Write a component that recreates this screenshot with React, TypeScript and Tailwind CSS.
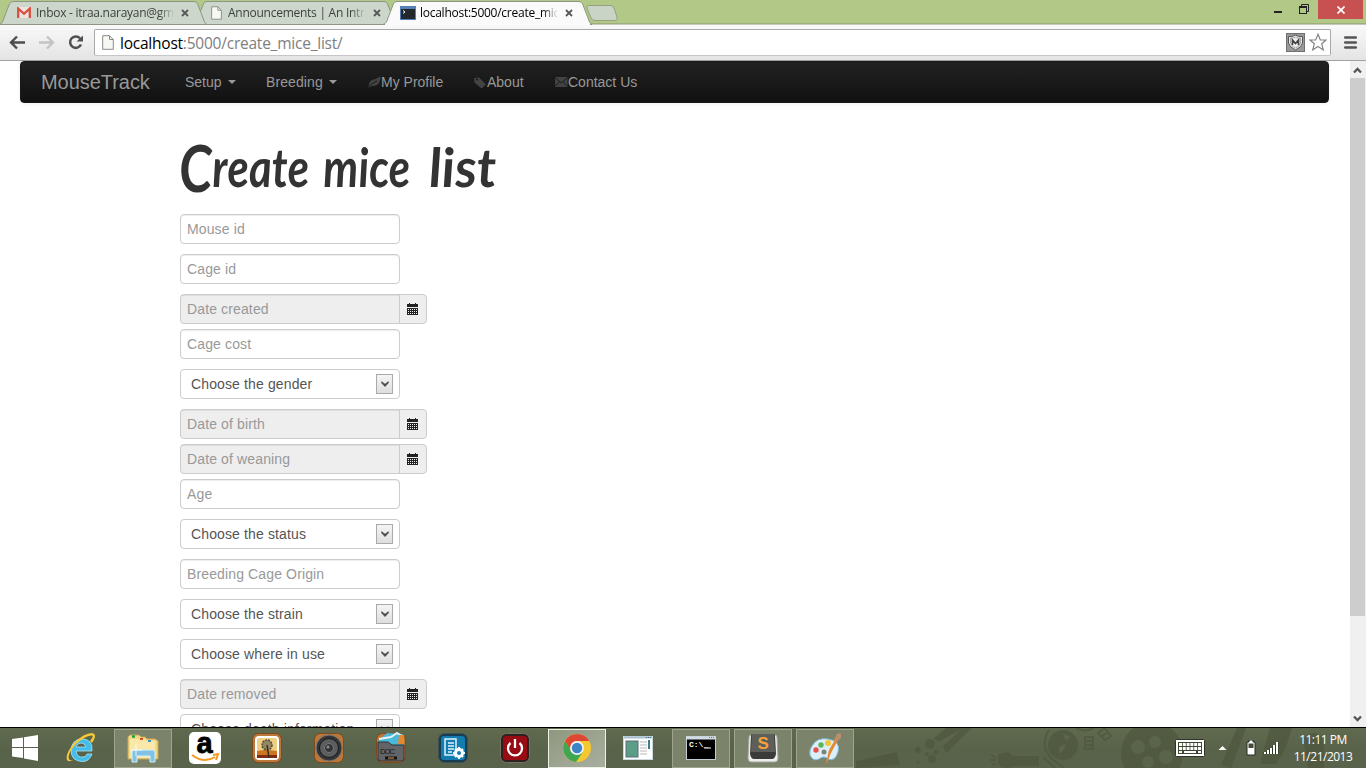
import type { ReactNode } from 'react';

const shade = 'shadow-[inset_0_1px_1px_rgba(0,0,0,0.075)]';

function tabPath(l: number, r: number) {
  return `M${l} 24.5C${l + 3} 24 ${l + 4} 21 ${l + 5} 18L${l + 10} 5C${l + 11} 2.5 ${l + 12} 1.5 ${l + 15} 1.5H${r - 14}C${r - 11} 1.5 ${r - 10} 2.5 ${r - 9} 5L${r - 4} 18C${r - 3} 21 ${r - 2} 24 ${r} 24.5Z`;
}

function Cross() {
  return (
    <svg width="8" height="8" viewBox="0 0 8 8" className="shrink-0">
      <path d="M1 1L7 7M7 1L1 7" stroke="#56595a" strokeWidth="1.8" />
    </svg>
  );
}

function PageIcon({ w, h }: { w: number; h: number }) {
  return (
    <svg width={w} height={h} viewBox="0 0 12 15" className="shrink-0">
      <path d="M.7.7H7.5L11.3 4.500V14.300H.7Z" fill="#f7f7f3" stroke="#8b8b86" />
      <path d="M7.500.7V4.500H11.300" fill="none" stroke="#8b8b86" />
    </svg>
  );
}

function TabStrip() {
  return (
    <div className="relative h-[24px] bg-[#b1c886] font-['Open_Sans',sans-serif] text-[12px]">
      <svg className="absolute left-0 top-0" width="1366" height="25" viewBox="0 0 1366 25">
        <path d="M0 24H1366" stroke="#8b9674" />
        <path d={tabPath(193, 397)} fill="#cdd6cb" stroke="#8d9686" />
        <path d={tabPath(-1, 207)} fill="#cdd6cb" stroke="#8d9686" />
        <path d={tabPath(383, 592)} fill="#fafafa" stroke="#8d9686" />
        <path d="M385 24.500H590" stroke="#fafafa" strokeWidth="2" />
        <path d="M589 5.500H611Q613 5.500 614 8L617 17Q618 20 615 20.500H595Q592 20.500 591 18L587 8Q586 5.500 589 5.500Z" fill="#cad4c6" stroke="#95a17e" />
      </svg>
      <div className="relative flex h-full">
        <div className="flex h-[25px] w-[192px] shrink-0 items-center pl-[17px]">
          <svg width="14" height="11" viewBox="0 0 14 11" className="shrink-0">
            <rect width="14" height="11" fill="#eee4df" />
            <path d="M1.200 11V1.500L7 6.800L12.800 1.500V11" fill="none" stroke="#d9503f" strokeWidth="2.300" />
          </svg>
          <span className="ml-[5px] w-[138px] overflow-hidden whitespace-nowrap text-[#3c413c] tracking-[-0.27px] [mask-image:linear-gradient(to_right,black_89%,transparent)]">Inbox - itraa.narayan@gmail.com</span>
          <span className="ml-[7px] flex"><Cross /></span>
        </div>
        <div className="flex h-[25px] w-[192px] shrink-0 items-center pl-[19px]">
          <PageIcon w={11} h={14} />
          <span className="ml-[6px] w-[138px] overflow-hidden whitespace-nowrap text-[#3c413c] tracking-[-0.26px] [mask-image:linear-gradient(to_right,black_89%,transparent)]">Announcements | An Introduction</span>
          <span className="ml-[7px] flex"><Cross /></span>
        </div>
        <div className="flex h-[25px] w-[200px] shrink-0 items-center pl-[16px]">
          <svg width="16" height="14" viewBox="0 0 16 14" className="shrink-0">
            <rect width="16" height="14" fill="#5480b8" />
            <rect x="1" y="3" width="14" height="10" fill="#24272b" />
            <path d="M3 4.500L5 6L3 7.500" fill="none" stroke="#fff" />
          </svg>
          <span className="ml-[4px] w-[138px] overflow-hidden whitespace-nowrap text-black tracking-[-0.26px] [mask-image:linear-gradient(to_right,black_89%,transparent)]">localhost:5000/create_mice_list</span>
          <span className="ml-[7px] flex"><Cross /></span>
        </div>
        <div className="ml-auto flex">
          <svg width="46" height="19" viewBox="0 0 46 19">
            <path d="M2 12H10" stroke="#222" strokeWidth="2" />
            <path d="M29.500 6V4.500H36.500V11.500H35" fill="none" stroke="#222" />
            <rect x="27.500" y="6.500" width="7" height="7" fill="none" stroke="#222" />
            <path d="M27 7H35" stroke="#222" strokeWidth="2" />
          </svg>
          <div className="mr-[3px] flex h-[19px] w-[45px] items-center justify-center bg-[#c75050]">
            <svg width="8" height="8" viewBox="0 0 8 8"><path d="M.5.5L7.500 7.500M7.500.5L.5 7.500" stroke="#fff" strokeWidth="1.700" /></svg>
          </div>
        </div>
      </div>
    </div>
  );
}

function Toolbar() {
  return (
    <div className="flex h-[37px] items-center border-b border-[#a2a2a2] bg-gradient-to-b from-[#fafafa] to-[#e4e4e4]">
      <svg width="94" height="36" viewBox="0 0 94 36" className="shrink-0">
        <path d="M25 18.500H11.500M17 12.500L11 18.500L17 24.500" fill="none" stroke="#4d4d4d" strokeWidth="2.400" />
        <path d="M39 18.500H52.500M47 12.500L53 18.500L47 24.500" fill="none" stroke="#c4c4c4" strokeWidth="2.400" />
        <path d="M80 14.300A5.700 5.700 0 1 0 81 20.500" fill="none" stroke="#505050" strokeWidth="2.500" />
        <path d="M83 11.500V17.500H76.500Z" fill="#505050" />
      </svg>
      <div className="mt-[1px] flex h-[27px] w-[1237px] shrink-0 items-center rounded-[2px] border border-[#a9a9a9] border-b-[#c6c6c6] bg-white pl-[7px] pr-[3px]">
        <PageIcon w={12} h={15} />
        <span className="ml-[6px] whitespace-nowrap font-['Open_Sans',sans-serif] text-[15.500px] leading-[20px] tracking-[-0.23px] text-[#808080]"><span className="text-black">localhost</span>:5000/create_mice_list/</span>
        <svg width="19" height="19" viewBox="0 0 19 19" className="ml-auto shrink-0">
          <rect x=".5" y=".5" width="18" height="18" fill="#999" stroke="#707070" />
          <path d="M2.500 3.500Q6 4 9.500 2Q13 4 16.500 3.500V10Q16 14 9.500 17Q3 14 2.500 10Z" fill="#e8e8e8" stroke="#555" />
          <path d="M4.500 5Q7 5.500 9.500 4Q12 5.500 14.500 5V10Q14 13 9.500 15Q5 13 4.500 10Z" fill="#eee" stroke="#888" strokeWidth=".7" />
          <path d="M6.500 12V7L9.500 10.500L12.500 7V12" fill="none" stroke="#444" strokeWidth="1.700" />
        </svg>
        <svg width="18" height="19" viewBox="0 0 18 19" className="ml-[4px] shrink-0">
          <path d="M9 1.300L11.300 7H17L12.700 10.800L14.300 17L9 13.500L3.700 17L5.300 10.800L1 7H6.700Z" fill="#fff" stroke="#848484" strokeWidth="1.200" />
        </svg>
      </div>
      <svg width="13" height="13" viewBox="0 0 13 13" className="ml-[13px] shrink-0">
        <path d="M1.200 1.500H11.800M1.200 6.500H11.800M1.200 11.500H11.800" stroke="#555" strokeWidth="2.600" strokeLinecap="round" />
      </svg>
    </div>
  );
}

function Caret() {
  return <span className="ml-[6px] mt-[-1px] h-0 w-0 border-x-[4px] border-t-[4px] border-x-transparent border-t-[#999]" />;
}

function Navbar() {
  return (
    <nav className="ml-[20px] flex h-[42px] w-[1309px] items-center rounded-[4px] border border-[#181818] bg-gradient-to-b from-[#222] to-[#111] pl-[20px] text-[14px] text-[#999] shadow-[0_1px_4px_rgba(0,0,0,0.065)]">
      <span className="w-[144px] text-[20px] tracking-[-0.05px]">MouseTrack</span>
      <span className="flex w-[81px] items-center">Setup<Caret /></span>
      <span className="flex w-[102px] items-center tracking-[0.1px]">Breeding<Caret /></span>
      <span className="flex w-[105px] items-center">
        <svg width="13" height="12" viewBox="0 0 13 12">
          <path d="M1 9C1 3 7 4 12.500.5C13 5 10 10.500 4 10L1.500 11.500L.3 11Z" fill="#434343" />
          <path d="M1 11Q4 6.500 9 5" fill="none" stroke="#1b1b1b" />
        </svg>My Profile
      </span>
      <span className="flex w-[82px] items-center">
        <svg width="14" height="13" viewBox="0 0 14 13"><path fillRule="evenodd" d="M1 2L6 1.500L13 8.500L8.500 12.500L1.500 6.500ZM3 3.500A1 1 0 1 0 5 3.500A1 1 0 1 0 3 3.500" fill="#434343" /></svg>About
      </span>
      <span className="flex items-center">
        <svg width="13" height="10" viewBox="0 0 13 10"><path d="M0 0H12.500V10H0Z" fill="#434343" /><path d="M0 .5L6.200 6L12.500.5M0 9.500L4.500 4.800M12.500 9.500L8 4.800" fill="none" stroke="#1b1b1b" /></svg>Contact Us
      </span>
    </nav>
  );
}

function TextField({ label }: { label: string }) {
  return <div className={`mb-[10px] flex h-[30px] w-[220px] shrink-0 items-center rounded-[4px] border border-[#ccc] bg-white px-[6px] text-[#999] ${shade}`}>{label}</div>;
}

function DateField({ label }: { label: string }) {
  return (
    <div className="mb-[5px] flex h-[30px] w-[247px] shrink-0 rounded-[4px] border border-[#ccc] bg-[#eee]">
      <div className={`flex w-[219px] items-center border-r border-[#ccc] px-[6px] text-[#999] ${shade}`}>{label}</div>
      <div className="flex flex-1 items-center pl-[7px]">
        <svg width="11" height="12" viewBox="0 0 11 12" shapeRendering="crispEdges">
          <path d="M0 1H11V4H0ZM2 0H3V1H2ZM8 0H9V1H8ZM0 5H11V12H0Z" fill="#222" />
          <path d="M1 6.500H10M1 8.500H10M1 10.500H10" stroke="#eee" strokeDasharray="1 1" />
        </svg>
      </div>
    </div>
  );
}

function SelectField({ label }: { label: string }) {
  return (
    <div className="mb-[10px] flex h-[30px] w-[220px] shrink-0 items-center rounded-[4px] border border-[#ccc] bg-white pl-[10px] pr-[6px] text-[#555]">
      {label}
      <span className="ml-auto flex h-[20px] w-[17px] items-center justify-center border border-[#aaa] bg-gradient-to-b from-[#f4f4f4] to-[#dedede]">
        <svg width="8" height="6" viewBox="0 0 8 6"><path d="M.7.7V2L4 5.500L7.300 2V.7L4 3.300Z" fill="#444" stroke="#444" strokeWidth=".7" /></svg>
      </span>
    </div>
  );
}

function Heading() {
  return (
    <h1 className="flex h-[111px] items-baseline pt-[39px] font-['Lato',sans-serif] text-[54px] font-bold italic leading-[50px] text-[#333]">
      <span className="w-[144px] whitespace-nowrap"><span className="inline-block origin-bottom-left scale-x-[0.82] skew-x-[3deg] first-letter:align-[-5px] first-letter:text-[65px]">Create</span></span>
      <span className="w-[106px] whitespace-nowrap"><span className="inline-block origin-bottom-left scale-x-[0.82] skew-x-[3deg]">mice</span></span>
      <span className="inline-block origin-bottom-left skew-x-[3deg]">list</span>
    </h1>
  );
}

function ScrollBar() {
  return (
    <div className="ml-auto flex h-full w-[16px] flex-col items-center bg-[#f0f0f0] pr-[1px]">
      <svg width="15" height="17" viewBox="0 0 15 17" className="shrink-0"><path d="M4 11.500L7.500 8L11 11.500" fill="none" stroke="#555" strokeWidth="2.300" /></svg>
      <div className="h-[538px] w-[15px] shrink-0 bg-[#cdcdcd]" />
      <svg width="15" height="17" viewBox="0 0 15 17" className="mt-auto shrink-0"><path d="M4 6.500L7.500 10L11 6.500" fill="none" stroke="#555" strokeWidth="2.300" /></svg>
    </div>
  );
}

function Cell({ kind = 'plain', children }: { kind?: 'plain' | 'open' | 'active'; children: ReactNode }) {
  const look = kind === 'open' ? 'border border-[#9da58f] bg-[#7b846b]' : kind === 'active' ? 'border border-[#eef0e8] bg-gradient-to-br from-[#8f987f] to-[#a9ae9f]' : '';
  return (
    <div className={`flex h-[39px] w-[58px] shrink-0 items-center justify-center ${look}`}>
      <svg width="32" height="32" viewBox="0 0 32 32">{children}</svg>
    </div>
  );
}

function WoodFrame() {
  return <rect x="1.500" y="1.500" width="29" height="29" rx="6" fill="#bc7839" stroke="#7d4a20" />;
}

function Backdrop() {
  return (
    <svg className="absolute left-[856px] top-0" width="510" height="40" viewBox="0 0 510 40" fill="#4f583f" opacity=".75">
      <path d="M0 33L41 24L44 37L0 40ZM78 10L90 0H116L90 25L87 18L105 2L82 14Z" />
      <circle cx="74" cy="16" r="5" /><circle cx="62" cy="22" r="3" /><circle cx="80" cy="24" r="2.500" /><circle cx="71" cy="26" r="2" /><circle cx="76" cy="31" r="4" /><circle cx="62" cy="34" r="1.500" />
      <path d="M143 27L152 25L157 29H182V37H157L151 40L143 36ZM135 27L140 30M134 32H140M136 37L140 35" stroke="#4f583f" strokeWidth="2" />
      <circle cx="207" cy="17" r="15" />
      <path d="M193 2Q183 18 196 31L208 40M187 29L199 40M220 0Q228 5 238 0" fill="none" stroke="#4f583f" strokeWidth="2" />
      <path d="M203 19L210 16L208 22L203 26ZM207 6L215 9L210 13Z" fill="#5b654b" />
      <path d="M229 9H237V21H229ZM229 13H237M229 17H237M242 5L249 0L255 8L249 12ZM246 8L252 4" fill="none" stroke="#4f583f" strokeWidth="2" />
      <circle cx="296" cy="25" r="31" />
      <g fill="#5b654b"><circle cx="282" cy="19" r="7" /><circle cx="299" cy="14" r="6" /><circle cx="310" cy="29" r="7" /><circle cx="292" cy="34" r="6" /></g>
      <path d="M365 37L381 0H390L375 40ZM414 0L436 0L429 22L420 36H404ZM447 10Q459 0 468 11V40H452Z" />
    </svg>
  );
}

function Taskbar() {
  return (
    <footer className="relative flex h-[41px] shrink-0 border-t border-black bg-gradient-to-b from-[#606a4e] via-[#59634a] to-[#59624a]">
      <Backdrop />
      <div className="relative flex w-full items-center">
        <div className="flex w-[52px] shrink-0 items-center pl-[12px]">
          <svg width="27" height="26" viewBox="0 0 27 26" fill="#fff"><path d="M0 4L11 2.500V12H0ZM12 2.300L26 0V12H12ZM0 13H11V23L0 21.500ZM12 13H26V26L12 23.500Z" /></svg>
        </div>
        <div className="flex gap-1">
          <Cell>
            <path d="M27 19H11Q12 26 18 25Q21 25 22 22H27Q24 30 17 29.500Q6 29 6 18Q7 7 17 7Q28 7 27 19ZM11 15H21Q20 11 16 11Q12 11 11 15Z" fill="#44bdeb" stroke="#a6e5fa" strokeWidth=".8" fillRule="evenodd" />
            <path d="M25 9Q30 3 26 3.500Q20 4 11 12Q2 22 4 27Q6 30 11 27Q4 31 2 28Q0 22 9 11Q19 1 27 1Q33 2 27 11Z" fill="#f7c838" />
          </Cell>
          <Cell kind="open">
            <path d="M1 5L3 3H12L14 5H18L20 7H28L31 9V27H1Z" fill="#f2d883" stroke="#c7a654" />
            <path d="M3 7H17L19 9H28V26H3Z" fill="#f9e8a7" /><path d="M5 4.500H8" stroke="#16a34a" strokeWidth="2.500" /><path d="M13 7H16" stroke="#d34f2f" strokeWidth="2" /><path d="M21 9H24" stroke="#3594cb" strokeWidth="2" />
            <path d="M5 20Q5 18 8 18H25Q28 18 28 20V30H23V24H10V30H5Z" fill="#84c2e4" stroke="#d1effa" /><path d="M9 12V24M3 18H15" stroke="#fff" opacity=".8" />
          </Cell>
          <Cell>
            <rect width="32" height="32" rx="5" fill="#fff" />
            <text x="7.500" y="21" fontFamily="Liberation Sans, sans-serif" fontSize="29" fontWeight="bold" fill="#000" stroke="#000" strokeWidth=".8">a</text>
            <path d="M3 23Q15 32 26 25M24 23L29 22L27 28" fill="none" stroke="#f39a24" strokeWidth="2" />
          </Cell>
          <Cell>
            <WoodFrame /><rect x="4" y="4" width="24" height="24" rx="4" fill="#fff" />
            <rect x="6" y="6" width="20" height="20" rx="2" fill="#efcf83" /><path d="M6 19Q15 17 26 19V26H6Z" fill="#cf7423" /><path d="M6 23H26V26H6Z" fill="#7e2d14" />
            <circle cx="16" cy="13" r="5" fill="#938660" stroke="#514c32" strokeWidth="1.500" strokeDasharray="2 1" /><path d="M16 13L18 26" stroke="#352f1f" strokeWidth="1.500" />
          </Cell>
          <Cell>
            <WoodFrame /><circle cx="16" cy="16" r="13" fill="#343536" stroke="#777" /><circle cx="16" cy="16" r="9.500" fill="#5c5d5e" stroke="#191919" /><circle cx="16" cy="16" r="4.500" fill="#34373a" stroke="#777" /><circle cx="15" cy="15" r="1.500" fill="#888" />
          </Cell>
          <Cell>
            <WoodFrame /><path d="M3 9L12 1L28 2L29 13L3 14Z" fill="#4ab8d9" /><path d="M4 7L16 5L22 1L28 5L26 11" fill="none" stroke="#e0f4f5" strokeWidth="2" /><path d="M24 3H29V12H23Z" fill="#e4892d" />
            <path d="M3 10H13L17 13H29V27Q29 29 27 29H5Q3 29 3 27Z" fill="#626467" stroke="#333" />
            <text x="5" y="22" fontFamily="Liberation Sans, sans-serif" fontSize="8" fill="#16191a" textLength="15">DOC</text><path d="M10 26H22" stroke="#111" strokeWidth="3" /><path d="M13 26H19" stroke="#ed9a51" />
          </Cell>
          <Cell>
            <rect x="1.500" y="1.500" width="29" height="29" rx="6" fill="#173d51" stroke="#3f5157" /><rect x="4" y="4" width="24" height="24" rx="3" fill="#147daf" />
            <path d="M8 7H19V23H8ZM11 11H17M11 14H17M11 17H17M11 20H15" fill="none" stroke="#dff4ff" strokeWidth="1.500" />
            <circle cx="22" cy="21" r="3.500" fill="#147daf" stroke="#fff" strokeWidth="3" /><path d="M22 15V18M22 24V27M16 21H19M25 21H28M18 17L20 19M24 23L26 25M26 17L24 19M20 23L18 25" stroke="#fff" strokeWidth="2" />
          </Cell>
          <Cell>
            <rect x="1.500" y="1.500" width="29" height="29" rx="6" fill="#30201f" stroke="#767461" /><rect x="4" y="4" width="24" height="24" rx="3" fill="#970c12" /><path d="M11.500 11A7 7 0 1 0 20.500 11M16 7V16" fill="none" stroke="#fff" strokeWidth="2.300" />
          </Cell>
          <Cell kind="active">
            <circle cx="16" cy="16" r="14" fill="#f5c92e" /><path d="M4 9A14 14 0 0 1 28.300 9H16A7 7 0 0 0 10 19Z" fill="#df4735" /><path d="M4 9A14 14 0 0 0 15 30L22 20Q16 25 10 19Z" fill="#3fa652" /><circle cx="16" cy="16" r="7" fill="#eef2f4" /><circle cx="16" cy="16" r="5.200" fill="#3d83c5" />
          </Cell>
          <Cell>
            <rect x=".5" y="4.500" width="29" height="23" fill="#fff" stroke="#cdd8df" /><path d="M1 5.500H29" stroke="#a8c1d0" strokeWidth="2" /><path d="M23 5.500H29" stroke="#386782" strokeDasharray="1 1" />
            <rect x="3" y="9" width="12" height="16" fill="#5b9d85" stroke="#566f7b" /><path d="M17 10H24M17 13H24M17 16H24M17 19H24M17 22H24" stroke="#b9b9b9" /><path d="M26 8V17" stroke="#3e7e8d" strokeWidth="2" />
          </Cell>
          <Cell kind="open">
            <rect x="1.500" y="4.500" width="29" height="23" fill="#000" stroke="#c2cbd2" /><path d="M1 6H31" stroke="#d0dbe4" strokeWidth="3" /><path d="M24 5.500H30" stroke="#597ba0" strokeDasharray="1 1" />
            <text x="4" y="15" fontFamily="Liberation Mono, monospace" fontSize="8" fontWeight="bold" fill="#fff">C:\_</text><path d="M19 16H26" stroke="#fff" />
          </Cell>
          <Cell kind="open">
            <path d="M2 5Q2 3 4 3H28Q30 3 30 5L31 26Q31 30 28 30H4Q1 30 1 26Z" fill="#edeeeb" stroke="#a4a69d" />
            <path d="M5 2H27Q28 2 28 4L29 22Q28 27 25 27H7Q4 27 3 22L4 4Q4 2 5 2Z" fill="#3b3c3a" /><path d="M5 2H27L28 20H4Z" fill="#5e5e5a" />
            <text x="10.500" y="17" fontFamily="Liberation Sans, sans-serif" fontSize="17" fontWeight="bold" fill="#f4a23b">S</text>
          </Cell>
          <Cell kind="open">
            <path d="M3 14Q8 5 19 7Q32 9 29 20Q26 30 19 27Q15 23 10 27Q4 30 1 23Q0 18 3 14Z" fill="#dceff8" stroke="#7cb9d8" />
            <circle cx="7" cy="18" r="2.700" fill="#e8504a" /><circle cx="12" cy="13" r="2.700" fill="#57b55b" /><circle cx="19" cy="11" r="3" fill="#f2c537" /><circle cx="15" cy="20" r="2.500" fill="#78847a" />
            <path d="M17 31L20 18L27 6L29 8L22 21L18 31Z" fill="#e68932" /><path d="M25 8L28 2Q33 0 33 4L29 9Z" fill="#bd8e6b" />
          </Cell>
        </div>
        <div className="ml-auto flex items-center">
          <svg width="30" height="18" viewBox="0 0 30 18">
            <rect x=".5" y=".5" width="29" height="17" rx="1" fill="#fff" stroke="#2e3326" />
            <rect x="3" y="3" width="24" height="12" fill="#3d4631" />
            <path d="M4 5.500H26M4 9.500H26" stroke="#fff" strokeWidth="3" strokeDasharray="3 .8" />
            <path d="M4 13H7M9 13H21M23 13H26" stroke="#fff" strokeWidth="2" />
          </svg>
          <svg width="9" height="6" viewBox="0 0 9 6" className="ml-[13px]"><path d="M4.500 1L8.500 5H.5Z" fill="#fff" /></svg>
          <svg width="10" height="16" viewBox="0 0 10 16" className="ml-[19px]"><path d="M1 2H3V0H7V2H9V15H1Z" fill="#fff" stroke="#252b20" /><path d="M2.500 3.500H7.500V8H2.500Z" fill="#414b35" /></svg>
          <svg width="17" height="14" viewBox="0 0 17 14" className="ml-[7px]"><path d="M2 11V13M5 9V13M8 7V13M11 4V13M14 1V13" stroke="#303627" strokeWidth="3" /><path d="M2 11V13M5 9V13M8 7V13M11 4V13M14 1V13" stroke="#fff" strokeWidth="2" /></svg>
          <div className="ml-[8px] w-[70px] text-center font-['Open_Sans',sans-serif] text-[12px] leading-[17px] tracking-[-0.5px] text-white"><div>11:11 PM</div><div>11/21/2013</div></div>
          <div className="w-[8px]" />
        </div>
      </div>
    </footer>
  );
}

export default function App() {
  return (
    <div className="flex h-[768px] w-[1366px] flex-col overflow-hidden bg-white font-['Liberation_Sans',Arial,sans-serif]">
      <TabStrip />
      <Toolbar />
      <main className="flex h-[666px] shrink-0 overflow-hidden">
        <div className="h-[666px] w-[1350px] overflow-hidden">
          <Navbar />
          <div className="flex flex-col pl-[180px] text-[14px] leading-[20px]">
            <Heading />
            <div className="flex flex-col tracking-[0.13px]">
              <TextField label="Mouse id" />
              <TextField label="Cage id" />
              <DateField label="Date created" />
              <TextField label="Cage cost" />
              <SelectField label="Choose the gender" />
              <DateField label="Date of birth" />
              <DateField label="Date of weaning" />
              <TextField label="Age" />
              <SelectField label="Choose the status" />
              <TextField label="Breeding Cage Origin" />
              <SelectField label="Choose the strain" />
              <SelectField label="Choose where in use" />
              <DateField label="Date removed" />
              <SelectField label="Choose death information" />
            </div>
          </div>
        </div>
        <ScrollBar />
      </main>
      <Taskbar />
    </div>
  );
}
